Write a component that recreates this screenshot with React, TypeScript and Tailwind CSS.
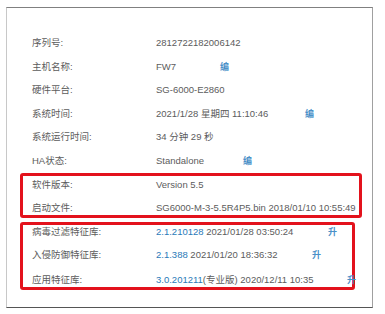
import React from "react";

const font = { fontFamily: '"Liberation Sans", Arial, "Noto Sans CJK SC", sans-serif' };

function Row({ label, children }: { label: string; children?: React.ReactNode }) {
  return (
    <div className="flex h-[14px] items-center leading-[14px] whitespace-nowrap">
      <div className="w-[124px] shrink-0">{label}</div>
      <div className="flex items-center">{children}</div>
    </div>
  );
}

const Edit = () => <span className="text-[9px] font-bold text-[#4a90c8]">编</span>;
const Up = () => <span className="text-[9px] font-bold text-[#4a90c8]">升</span>;

export default function App() {
  return (
    <div className="w-[385px] h-[314px] bg-white overflow-hidden pt-[7px] pl-[6px] text-[9.5px] text-[#5c5c5c]" style={font}>
      <div className="w-[367px] h-[301px] border border-t-[#808080] border-r-[#a0a0a0] border-b-[#555] border-l-[#c8c8c8] pt-[28px]">
        <div className="flex flex-col gap-[9.5px] pl-[25px]">
          <Row label="序列号:">2812722182006142</Row>
          <Row label="主机名称:">
            <span className="inline-block w-[64px]">FW7</span>
            <Edit />
          </Row>
          <Row label="硬件平台:">SG-6000-E2860</Row>
          <Row label="系统时间:">
            <span className="inline-block w-[149px]">2021/1/28 星期四 11:10:46</span>
            <Edit />
          </Row>
          <Row label="系统运行时间:">34 分钟 29 秒</Row>
          <Row label="HA状态:">
            <span className="inline-block w-[87px]">Standalone</span>
            <Edit />
          </Row>
        </div>

        <div className="ml-[13px] mt-[5.5px] w-[342px] border-[3px] border-[#e3121c] rounded-[3px] pl-[9px] pt-[2px] flex flex-col gap-[9px]">
          <Row label="软件版本:">Version 5.5</Row>
          <Row label="启动文件:">SG6000-M-3-5.5R4P5.bin 2018/01/10 10:55:49</Row>
        </div>

        <div className="ml-[13px] mt-[4px] w-[335px] border-[3px] border-[#e3121c] rounded-[3px] pl-[9px] flex flex-col">
          <Row label="病毒过滤特征库:">
            <span className="inline-block w-[172px]">
              <span className="text-[#2a7ab8]">2.1.210128</span> 2021/01/28 03:50:24
            </span>
            <Up />
          </Row>
          <div className="h-[9px]" />
          <Row label="入侵防御特征库:">
            <span className="inline-block w-[156px]">
              <span className="text-[#2a7ab8]">2.1.388</span> 2021/01/20 18:36:32
            </span>
            <Up />
          </Row>
          <div className="h-[11px]" />
          <Row label="应用特征库:">
            <span className="inline-block w-[191px]">
              <span className="text-[#2a7ab8]">3.0.201211</span>(专业版) 2020/12/11 10:35
            </span>
            <Up />
          </Row>
        </div>
      </div>
    </div>
  );
}
